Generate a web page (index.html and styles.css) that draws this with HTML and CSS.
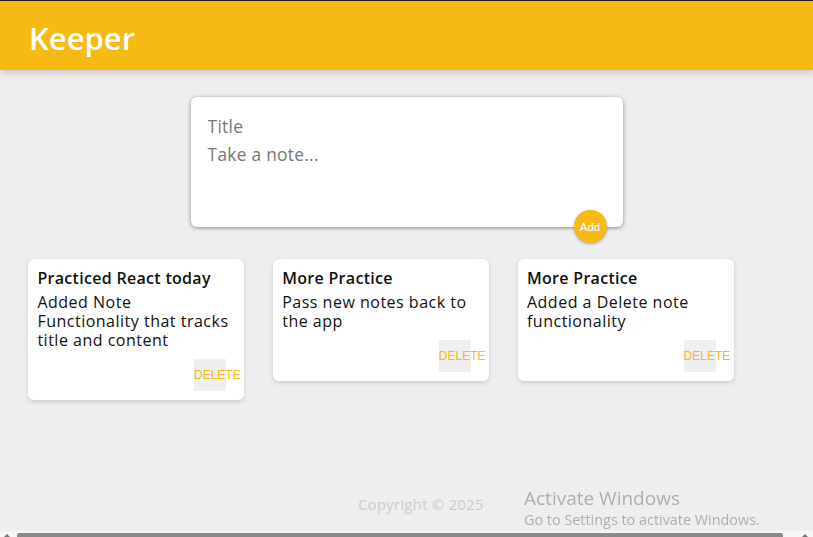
FILE: index.html
```html
<!DOCTYPE html>
<html lang="en">
<head>
<meta charset="utf-8">
<title>Keeper</title>
<link rel="stylesheet" href="styles.css">
</head>
<body>
<div class="page">
  <header class="header">
    <h1 class="logo">Keeper</h1>
  </header>

  <form class="create-note">
    <input class="field" name="title" placeholder="Title">
    <textarea class="field area" name="content" placeholder="Take a note..."></textarea>
    <button type="button" class="add-btn">Add</button>
  </form>

  <div class="notes">
    <div class="note">
      <h1 class="note-title">Practiced React today</h1>
      <p class="note-body">Added Note Functionality that tracks title and content</p>
      <div class="note-actions"><button type="button" class="del-btn">DELETE</button></div>
    </div>
    <div class="note">
      <h1 class="note-title">More Practice</h1>
      <p class="note-body">Pass new notes back to the app</p>
      <div class="note-actions"><button type="button" class="del-btn">DELETE</button></div>
    </div>
    <div class="note">
      <h1 class="note-title">More Practice</h1>
      <p class="note-body">Added a Delete note functionality</p>
      <div class="note-actions"><button type="button" class="del-btn">DELETE</button></div>
    </div>
  </div>

  <footer class="footer">
    <p class="copyright">Copyright © 2025</p>
  </footer>
</div>

<div class="watermark">
  <div class="wm-title">Activate Windows</div>
  <div class="wm-sub">Go to Settings to activate Windows.</div>
</div>

<div class="hscroll">
  <span class="arrow arrow-left"></span>
  <span class="thumb"></span>
  <span class="arrow arrow-right"></span>
</div>
</body>
</html>
```

FILE: styles.css
```css
* {
  margin: 0;
  padding: 0;
  box-sizing: border-box;
}

html, body {
  height: 100%;
  overflow: hidden;
}

body {
  background: #eeeeee;
  font-family: "Open Sans", "Liberation Sans", sans-serif;
  border-top: 1px solid #1f1f1f;
}

.page {
  height: 536px;
  padding: 0 14px;
  display: flex;
  flex-direction: column;
}

.header {
  background: #f5ba13;
  margin: 0 -14px;
  padding: 17px 29px 12px;
  height: 69px;
  box-shadow: 0 0 9px 0 rgba(0, 0, 0, 0.3);
  position: relative;
  z-index: 1;
}

.logo {
  color: #fff;
  font-family: "Open Sans", "Lato", sans-serif;
  font-weight: 600;
  font-size: 31px;
  line-height: 40px;
  letter-spacing: 0;
}

.create-note {
  position: relative;
  width: 432px;
  height: 130px;
  margin: 27px auto 18px;
  background: #fff;
  padding: 15px 13.5px 13.5px;
  border-radius: 6px;
  box-shadow: 0 1px 4.5px rgb(138, 137, 137);
}

.field {
  display: block;
  width: 100%;
  border: none;
  outline: none;
  padding: 3.6px;
  font-family: inherit;
  font-size: 17.3px;
  letter-spacing: 0.3px;
  line-height: 21px;
  color: #333;
  background: transparent;
  resize: none;
}

.field::placeholder {
  color: #777;
}

.area {
  height: 68px;
}

.add-btn {
  position: absolute;
  right: 16px;
  bottom: -16px;
  width: 33px;
  height: 33px;
  border: none;
  border-radius: 50%;
  background: #f5ba13;
  color: #fff;
  font-family: "Liberation Sans", Arial, sans-serif;
  font-size: 11.5px;
  box-shadow: 0 1px 3px rgba(0, 0, 0, 0.3);
}

.notes {
  display: flex;
  align-items: flex-start;
  flex-wrap: wrap;
}

.note {
  width: 216px;
  margin: 14.4px;
  padding: 9px;
  background: #fff;
  border-radius: 6px;
  box-shadow: 0 1.8px 4.5px #cccccc;
  color: #111;
}

.note-title {
  font-size: 16px;
  font-weight: 600;
  letter-spacing: 0.3px;
  line-height: 19px;
  margin: 1px 0 4.4px;
}

.note-body {
  font-size: 16px;
  letter-spacing: 0.5px;
  line-height: 19px;
  margin-bottom: 9px;
  white-space: pre-wrap;
  word-wrap: break-word;
}

.note-actions {
  display: flex;
  justify-content: flex-end;
  padding-right: 9px;
}

.del-btn {
  width: 32.4px;
  height: 32.4px;
  border: none;
  background: #efefef;
  color: #f5ba13;
  font-family: "Liberation Sans", Arial, sans-serif;
  font-size: 12px;
  text-align: left;
  white-space: nowrap;
  overflow: visible;
  padding: 0;
}

.footer {
  margin-top: auto;
  height: 41px;
  padding-left: 29px;
  text-align: center;
}

.copyright {
  color: #cccccc;
  font-size: 14.4px;
  letter-spacing: 0.5px;
  line-height: 18px;
}

.watermark {
  position: fixed;
  left: 524px;
  top: 486px;
  color: #a9a9a9;
  font-family: "Open Sans", "Noto Sans", sans-serif;
  opacity: 0.9;
}

.wm-title {
  font-size: 19px;
  line-height: 24px;
}

.wm-sub {
  font-size: 14.4px;
  line-height: 20px;
}

.hscroll {
  position: fixed;
  left: 0;
  right: 0;
  bottom: 0;
  height: 6px;
  background: #f6f6f6;
  display: flex;
  align-items: flex-end;
}

.thumb {
  display: block;
  margin-left: 17px;
  width: 766px;
  height: 4px;
  background: #8a8a8a;
  border-radius: 2px 2px 0 0;
}

.arrow {
  display: block;
  width: 0;
  height: 0;
  border-left: 3px solid transparent;
  border-right: 3px solid transparent;
  border-bottom: 3px solid #777;
}

.arrow-left {
  margin-left: 4px;
  position: absolute;
  left: 0;
  bottom: 0;
}

.arrow-right {
  position: absolute;
  right: 5px;
  bottom: 0;
}
```
